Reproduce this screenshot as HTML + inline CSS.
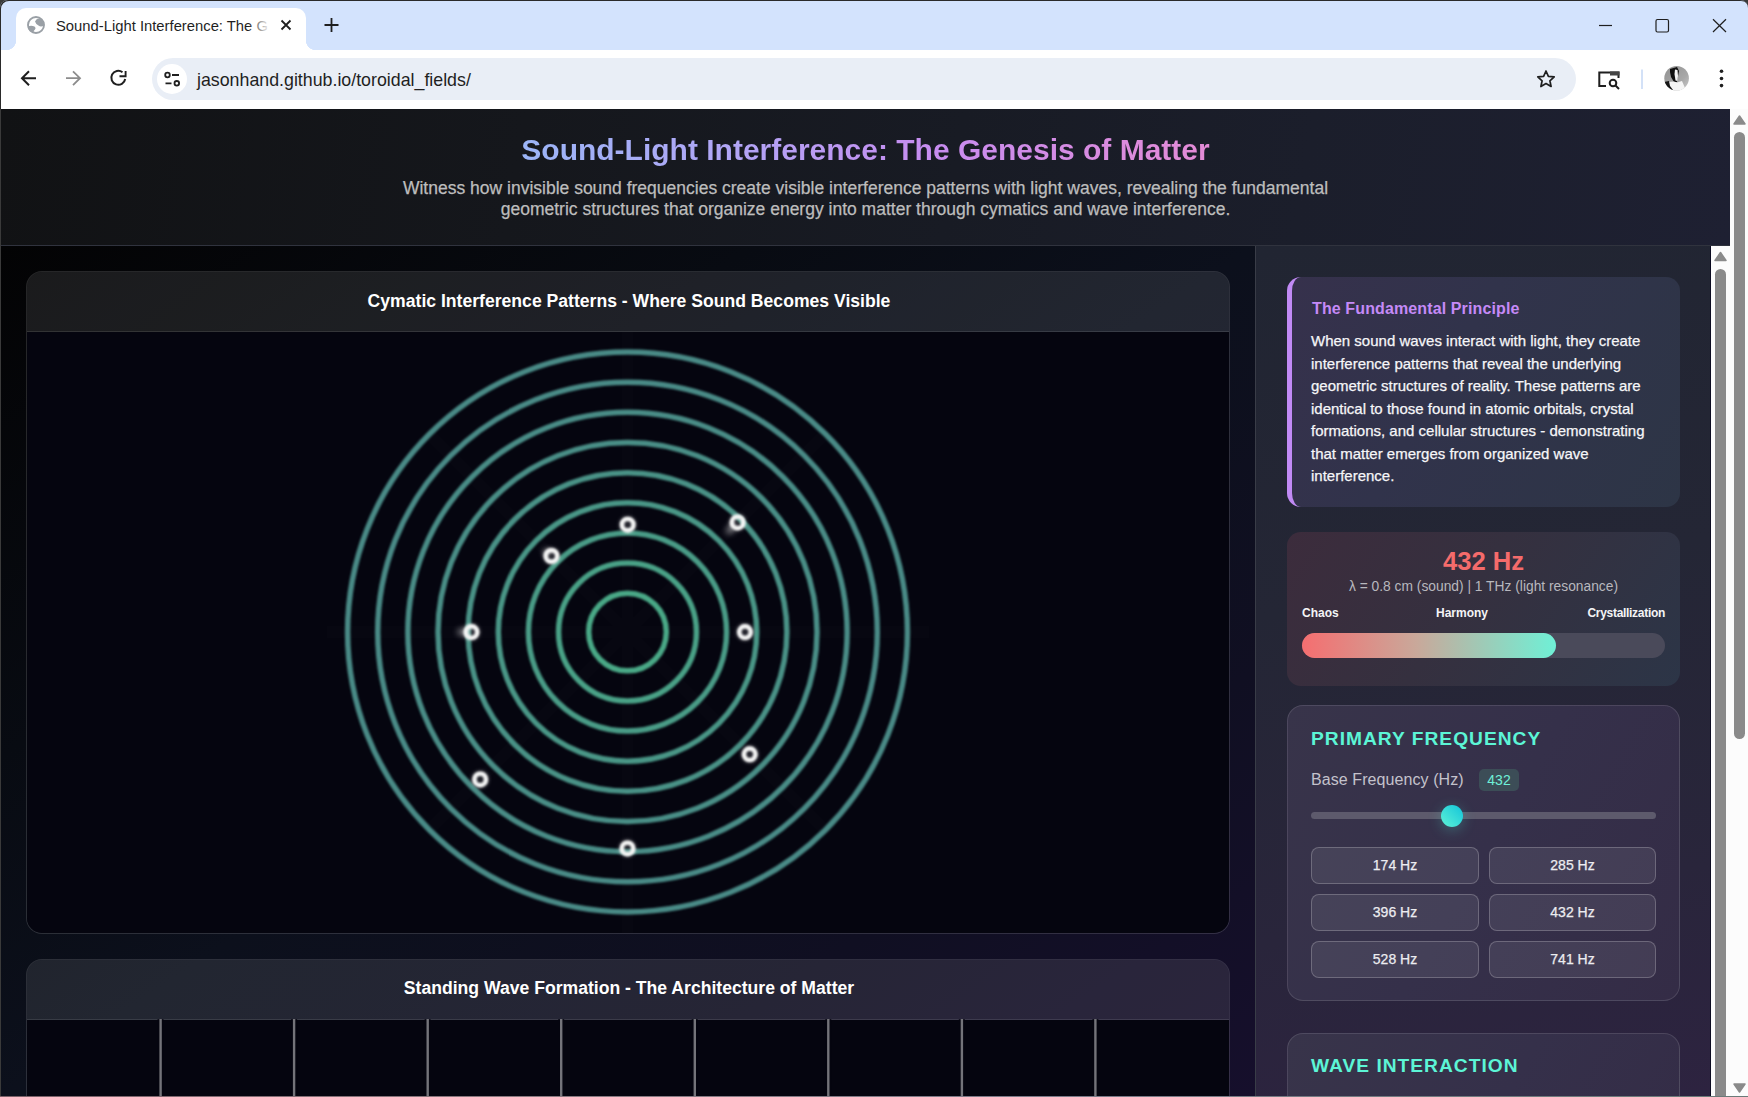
<!DOCTYPE html>
<html><head><meta charset="utf-8">
<style>
*{margin:0;padding:0;box-sizing:border-box}
html,body{width:1748px;height:1097px;overflow:hidden;background:#3a3a3a;font-family:"Liberation Sans",sans-serif;position:relative}
div,svg{position:absolute}
.t{white-space:nowrap}
.pg{-webkit-text-stroke:0.25px currentColor}
/* chrome */
#tabbar{left:0;top:0;width:1748px;height:50px;background:#d3e3fd;border-radius:8px 8px 0 0;box-shadow:inset 1px 1px 0 #2a2a2a}
#tab{left:16px;top:8px;width:290px;height:42px;background:#fff;border-radius:10px 10px 0 0}
#toolbar{left:0;top:50px;width:1748px;height:59px;background:#fff;box-shadow:inset 1px 0 0 #2a2a2a}
#omni{left:152px;top:58px;width:1424px;height:42px;background:#e9eef6;border-radius:21px}
/* page */
#hdr{left:1px;top:109px;width:1729px;height:137px;background:linear-gradient(100deg,#111214 0%,#15171c 30%,#181b24 55%,#1b1e2b 75%,#1e2032 100%);border-bottom:1px solid #30333e}
#leftcol{left:1px;top:246px;width:1254px;height:851px;background:linear-gradient(to bottom right,#030304 0%,#080b12 30%,#0c101c 50%,#100f22 75%,#160f2c 100%)}
#side{left:1255px;top:246px;width:456px;height:851px;background:linear-gradient(170deg,#212532 0%,#242635 40%,#29253b 75%,#2d2340 100%);border-left:1px solid #393c47;border-right:1px solid #0a0a20}
#sb1{left:1711px;top:246px;width:19px;height:851px;background:#fcfcfc}
#sb2{left:1730px;top:109px;width:18px;height:988px;background:#fcfcfc}
.thumb{background:#8a8a8a;border-radius:6px}
.panel{border:1px solid rgba(255,255,255,0.11);border-radius:16px;overflow:hidden;background:rgba(255,255,255,0.03)}
.canvas{left:0;top:60px;width:100%;background:#05050f}
.phead{left:0;top:0;width:100%;height:60px;background:rgba(255,255,255,0.065);border-bottom:1px solid rgba(255,255,255,0.1)}
.ptitle{left:0;width:100%;text-align:center;font-weight:bold;font-size:17.6px;line-height:21px;color:#fff}
.card{border-radius:14px}
.btn{-webkit-text-stroke:0.25px currentColor;height:37px;border:1px solid rgba(255,255,255,0.22);border-radius:8px;background:rgba(255,255,255,0.08);color:#ececf0;font-size:14px;line-height:35px;text-align:center}
</style></head>
<body>
<!-- browser chrome -->
<div id="tabbar"></div>
<div id="tab"></div>
<div id="toolbar"></div>
<!-- tab feet -->
<div style="left:6px;top:40px;width:10px;height:10px;background:radial-gradient(circle at 0 0,#d3e3fd 10px,#fff 10.5px)"></div>
<div style="left:306px;top:40px;width:10px;height:10px;background:radial-gradient(circle at 100% 0,#d3e3fd 10px,#fff 10.5px)"></div>

<div id="omni"></div>


<!-- chrome icons -->
<svg style="left:0;top:0" width="1748" height="109" viewBox="0 0 1748 109">
  <g fill="none" stroke-linecap="butt">
    <!-- globe -->
    <circle cx="36" cy="25" r="8" stroke="#9aa0a6" stroke-width="1.9"/>
    <path d="M35 21.5 Q36 19 38.5 18.5 L42 19.5 Q44.3 22.5 43.8 25.5 Q41 27.5 38.5 25.5 Q36 24.5 35 21.5Z" fill="#9aa0a6"/>
    <path d="M28 26.5 Q31 25 34.5 26.5 Q36.5 28 35 29.5 Q33.5 30.5 33.5 32.5 Q30 32 28.5 29.5Z" fill="#9aa0a6"/>
    <!-- tab close -->
    <path d="M281.5 20.5 L290.5 29.5 M290.5 20.5 L281.5 29.5" stroke="#1f1f1f" stroke-width="1.8"/>
    <!-- new tab plus -->
    <path d="M331.5 18 V32 M324.5 25 H338.5" stroke="#1f1f1f" stroke-width="1.8"/>
    <!-- window controls -->
    <path d="M1599 25.5 H1612" stroke="#1f1f1f" stroke-width="1.2"/>
    <rect x="1656" y="19.5" width="12.5" height="12.5" rx="1.5" stroke="#1f1f1f" stroke-width="1.2"/>
    <path d="M1713 19.3 L1726 32 M1726 19.3 L1713 32" stroke="#1f1f1f" stroke-width="1.2"/>
    <!-- back -->
    <path d="M36 78.2 H22 M29 71.3 L22 78.2 L29 85.2" stroke="#1f1f1f" stroke-width="2"/>
    <!-- forward -->
    <path d="M66 78.2 H80 M73 71.3 L80 78.2 L73 85.2" stroke="#8c8c8c" stroke-width="1.8"/>
    <!-- reload -->
    <path d="M125.2 79 A7 7 0 1 1 122.5 72.2" stroke="#1f1f1f" stroke-width="2"/>
    <path d="M119.5 76.2 H125.6 V71" stroke="#1f1f1f" stroke-width="1.9"/>
    <!-- site info -->
    <circle cx="172" cy="79" r="15" fill="#fff"/>
    <circle cx="167.5" cy="75" r="2.3" stroke="#1f1f1f" stroke-width="1.8"/>
    <path d="M172 75 H179 M165.5 83.3 H171.5" stroke="#1f1f1f" stroke-width="1.8"/>
    <circle cx="176.8" cy="83.3" r="2.3" stroke="#1f1f1f" stroke-width="1.8"/>
    <!-- star -->
    <path d="M1546 71 L1548.4 76.3 L1554.2 76.9 L1549.9 80.8 L1551.1 86.5 L1546 83.6 L1540.9 86.5 L1542.1 80.8 L1537.8 76.9 L1543.6 76.3 Z" stroke="#1f1f1f" stroke-width="1.7" stroke-linejoin="round"/>
    <!-- tab search -->
    <path d="M1606 86 H1599.3 V72.5 H1618.5 V78" stroke="#1f1f1f" stroke-width="2"/>
    <rect x="1610" y="71.5" width="9.5" height="4" fill="#444"/>
    <circle cx="1613" cy="83" r="3.3" stroke="#1f1f1f" stroke-width="2"/>
    <path d="M1615.5 85.5 L1619 89" stroke="#1f1f1f" stroke-width="2"/>
    <!-- separator -->
    <path d="M1642 69.5 V89" stroke="#c5d7f5" stroke-width="1.5"/>
    <!-- kebab -->
    <circle cx="1721.5" cy="71.3" r="1.8" fill="#1f1f1f"/>
    <circle cx="1721.5" cy="78.5" r="1.8" fill="#1f1f1f"/>
    <circle cx="1721.5" cy="85.6" r="1.8" fill="#1f1f1f"/>
  </g>
  <defs>
    <linearGradient id="av" x1="0" y1="0" x2="1" y2="1"><stop offset="0" stop-color="#8a8a8a"/><stop offset="0.6" stop-color="#a8a8a8"/><stop offset="1" stop-color="#dcdcdc"/></linearGradient>
    <linearGradient id="tabfade" x1="0" x2="1"><stop offset="0" stop-color="#fff" stop-opacity="0"/><stop offset="1" stop-color="#fff" stop-opacity="1"/></linearGradient>
  </defs>
  <g transform="translate(1660 62)">
    <clipPath id="avc"><circle cx="16.6" cy="16.3" r="12.3"/></clipPath>
    <g clip-path="url(#avc)">
      <rect x="0" y="0" width="34" height="32" fill="url(#av)"/>
      <path d="M10 7 L17 5 L19 9 L17 20 L14 20 L11 15 L10 10 Z" fill="#111"/>
      <path d="M15 7.5 L17.5 8 L18 14 L17.5 19 L15.5 18.5 L14.5 12 Z" fill="#f5f5f5"/>
      <path d="M8 20 L14 19.5 L17 20.5 L22 19 L25 26 L20 30 L11 30 L8 25 Z" fill="#f6f6f6"/>
      <path d="M4 20 L9 19 L10 24 L13 28 L9 29 L4 24 Z" fill="#151515"/>
    </g>
  </g>
</svg>
<div class="t" style="left:56px;top:16.5px;font-size:14.8px;line-height:18px;color:#1f1f1f">Sound-Light Interference: The G</div>
<div style="left:248px;top:14px;width:22px;height:22px;background:linear-gradient(90deg,rgba(255,255,255,0),#fff)"></div>
<div class="t" style="left:197px;top:68.5px;font-size:17.8px;line-height:22px;color:#1f1f1f">jasonhand.github.io/toroidal_fields/</div>

<!-- page -->
<div id="hdr">
  <div class="t" style="left:0;top:23.4px;width:1729px;text-align:center;font-weight:bold;font-size:30px;line-height:36px"><span style="background:linear-gradient(90deg,#9bb5f7 0%,#b1a6f6 30%,#c78cf0 60%,#e48bd6 100%);-webkit-background-clip:text;background-clip:text;color:transparent">Sound-Light Interference: The Genesis of Matter</span></div>
  <div class="t pg" style="left:0;top:69.2px;width:1729px;text-align:center;font-size:17.5px;line-height:21px;color:#bdbdbd">Witness how invisible sound frequencies create visible interference patterns with light waves, revealing the fundamental<br>geometric structures that organize energy into matter through cymatics and wave interference.</div>
</div>

<div id="leftcol"></div>

<!-- cymatic panel -->
<div class="panel" style="left:26px;top:271px;width:1204px;height:663px">
  <div class="phead"></div><div class="canvas" style="height:601px"></div>
  <div class="ptitle t" style="top:19.4px;left:1px">Cymatic Interference Patterns - Where Sound Becomes Visible</div>
</div>

<!-- standing wave panel -->
<div class="panel" style="left:26px;top:959px;width:1204px;height:200px">
  <div class="phead"></div><div class="canvas" style="height:200px"></div>
  <div class="ptitle t" style="top:17.9px;left:1px">Standing Wave Formation - The Architecture of Matter</div>
</div>


<svg style="left:27px;top:332px" width="1202" height="601" viewBox="0 0 1202 601">
  <defs>
    <filter id="soft" x="-10%" y="-10%" width="120%" height="120%"><feGaussianBlur stdDeviation="0.85"/></filter>
    <filter id="glow" x="-100%" y="-100%" width="300%" height="300%"><feGaussianBlur stdDeviation="2"/></filter>
    <filter id="trail" x="-100%" y="-100%" width="300%" height="300%"><feGaussianBlur stdDeviation="3"/></filter>
  </defs>
  <g stroke="rgba(255,255,255,0.012)" stroke-width="12">
    <path d="M600.5 0 V601 M300 300 H902 M400 100 L800 500 M800 100 L400 500"/>
  </g>
  <g fill="none" filter="url(#soft)">
    <circle cx="600.5" cy="300" r="38.80" stroke="rgb(72,168,134)" stroke-width="5.50"/>
    <circle cx="600.5" cy="300" r="68.94" stroke="rgb(72,161,134)" stroke-width="5.50"/>
    <circle cx="600.5" cy="300" r="99.08" stroke="rgb(72,155,134)" stroke-width="5.50"/>
    <circle cx="600.5" cy="300" r="129.22" stroke="rgb(72,150,134)" stroke-width="5.50"/>
    <circle cx="600.5" cy="300" r="159.36" stroke="rgb(72,146,134)" stroke-width="5.50"/>
    <circle cx="600.5" cy="300" r="189.50" stroke="rgb(72,142,134)" stroke-width="5.50"/>
    <circle cx="600.5" cy="300" r="219.64" stroke="rgb(72,140,134)" stroke-width="5.50"/>
    <circle cx="600.5" cy="300" r="249.78" stroke="rgb(72,138,134)" stroke-width="5.50"/>
    <circle cx="600.5" cy="300" r="279.92" stroke="rgb(72,138,134)" stroke-width="5.50"/>
  </g>
  <g fill="#ffffff" opacity="0.5" filter="url(#trail)">
    <ellipse cx="704" cy="197" rx="6" ry="3.5" transform="rotate(-45 704 197)"/>
    <ellipse cx="437" cy="300" rx="7" ry="3.5"/>
    <ellipse cx="520" cy="220" rx="4" ry="3" />
  </g>
  <g fill="none" stroke="#ffffff" stroke-width="5" opacity="0.4" filter="url(#glow)">
    <circle cx="600.7" cy="192.7" r="5.8"/>
    <circle cx="710.6" cy="190.4" r="5.8"/>
    <circle cx="524.5" cy="224.0" r="5.8"/>
    <circle cx="444.5" cy="300.1" r="5.8"/>
    <circle cx="718.0" cy="300.1" r="5.8"/>
    <circle cx="722.7" cy="422.3" r="5.8"/>
    <circle cx="453.2" cy="447.4" r="5.8"/>
    <circle cx="600.5" cy="516.4" r="5.8"/>
  </g>
  <g fill="none" stroke="#f4f4f4" stroke-width="4.4" filter="url(#soft)">
    <circle cx="600.7" cy="192.7" r="5.8"/>
    <circle cx="710.6" cy="190.4" r="5.8"/>
    <circle cx="524.5" cy="224.0" r="5.8"/>
    <circle cx="444.5" cy="300.1" r="5.8"/>
    <circle cx="718.0" cy="300.1" r="5.8"/>
    <circle cx="722.7" cy="422.3" r="5.8"/>
    <circle cx="453.2" cy="447.4" r="5.8"/>
    <circle cx="600.5" cy="516.4" r="5.8"/>
  </g>
</svg>
<svg style="left:27px;top:1019px" width="1202" height="80" viewBox="0 0 1202 80"><g stroke="#050510" stroke-width="6" opacity="0.8"><path d="M133.5 0 V80 M267.1 0 V80 M400.6 0 V80 M534.2 0 V80 M667.7 0 V80 M801.3 0 V80 M934.8 0 V80 M1068.4 0 V80"/></g><g stroke="#74747a" stroke-width="2.4"><path d="M133.6 0 V80"/><path d="M267.1 0 V80"/><path d="M400.7 0 V80"/><path d="M534.2 0 V80"/><path d="M667.8 0 V80"/><path d="M801.3 0 V80"/><path d="M934.9 0 V80"/><path d="M1068.4 0 V80"/></g></svg>
<div id="side"></div>

<!-- card 1 -->
<div class="card" style="left:1287px;top:277px;width:393px;height:230px;background:linear-gradient(120deg,#36314c 0%,#31334b 40%,#2d3546 100%);border-left:5px solid #c18af5"></div>
<div class="t" style="left:1312px;top:298.7px;font-weight:bold;font-size:16px;line-height:19px;color:#c58af7;letter-spacing:0.12px">The Fundamental Principle</div>
<div class="pg" style="left:1311px;top:330.2px;width:352px;font-size:15px;line-height:22.5px;color:#f6f6f8">When sound waves interact with light, they create interference patterns that reveal the underlying geometric structures of reality. These patterns are identical to those found in atomic orbitals, crystal formations, and cellular structures - demonstrating that matter emerges from organized wave interference.</div>

<!-- card 2 -->
<div class="card" style="left:1287px;top:532px;width:393px;height:154px;background:linear-gradient(125deg,#3c2c3c 0%,#35303f 45%,#2c3547 100%)"></div>
<div class="t" style="left:1287px;top:546.1px;width:393px;text-align:center;font-weight:bold;font-size:25.6px;line-height:30px;color:#f56b6b">432 Hz</div>
<div class="t" style="left:1287px;top:578.2px;width:393px;text-align:center;font-size:13.8px;line-height:17px;color:#b8b8be">λ = 0.8 cm (sound) | 1 THz (light resonance)</div>
<div class="t" style="left:1302px;top:606.3px;font-weight:bold;font-size:12px;line-height:14px;color:#f4f4f6">Chaos</div>
<div class="t" style="left:1412px;top:606.3px;width:100px;text-align:center;font-weight:bold;font-size:12px;line-height:14px;color:#f4f4f6">Harmony</div>
<div class="t" style="left:1565px;top:606.3px;width:100px;text-align:right;font-weight:bold;font-size:12px;line-height:14px;color:#f4f4f6;letter-spacing:-0.3px">Crystallization</div>
<div style="left:1302px;top:633px;width:363px;height:25px;border-radius:13px;background:#4a4a5a"></div>
<div style="left:1302px;top:633px;width:254px;height:25px;border-radius:13px;background:linear-gradient(90deg,#f56e70 0%,#c9a89a 45%,#6ff0d6 100%)"></div>

<!-- card 3 -->
<div class="card" style="left:1287px;top:705px;width:393px;height:296px;border:1px solid rgba(255,255,255,0.12);border-radius:16px;background:linear-gradient(120deg,#38344a 0%,#35304a 50%,#342c46 100%)"></div>
<div class="t" style="left:1311px;top:726.8px;font-weight:bold;font-size:19.2px;line-height:23px;letter-spacing:1px;color:#5cf5d6">PRIMARY FREQUENCY</div>
<div class="t" style="left:1311px;top:769.7px;font-size:16px;line-height:19px;color:#c4c2cc;letter-spacing:0.08px">Base Frequency (Hz)</div>
<div class="t" style="left:1479px;top:769px;width:40px;height:22px;border-radius:5px;background:#3c4d57;color:#6ff0d8;font-size:14px;line-height:22px;text-align:center">432</div>
<div style="left:1311px;top:812px;width:345px;height:7px;border-radius:4px;background:#5d5a6c"></div>
<div style="left:1441px;top:804.5px;width:22px;height:22px;border-radius:50%;background:linear-gradient(45deg,#5ff2d6,#12c4da);box-shadow:0 3px 14px rgba(80,230,210,0.3)"></div>
<div class="btn" style="left:1311px;top:847px;width:168px">174 Hz</div>
<div class="btn" style="left:1489px;top:847px;width:167px">285 Hz</div>
<div class="btn" style="left:1311px;top:894px;width:168px">396 Hz</div>
<div class="btn" style="left:1489px;top:894px;width:167px">432 Hz</div>
<div class="btn" style="left:1311px;top:941px;width:168px">528 Hz</div>
<div class="btn" style="left:1489px;top:941px;width:167px">741 Hz</div>

<!-- card 4 -->
<div class="card" style="left:1287px;top:1033px;width:393px;height:200px;border:1px solid rgba(255,255,255,0.12);border-radius:16px;background:linear-gradient(120deg,#38344a 0%,#35304a 50%,#342c46 100%)"></div>
<div class="t" style="left:1311px;top:1054.4px;font-weight:bold;font-size:19.2px;line-height:23px;letter-spacing:1px;color:#5cf5d6">WAVE INTERACTION</div>

<!-- scrollbars -->
<div id="sb1"></div>
<div id="sb2"></div>
<div class="thumb" style="left:1715px;top:269px;width:11px;height:840px"></div>
<div class="thumb" style="left:1734px;top:132px;width:11px;height:607px"></div>

<svg style="left:1711px;top:109px" width="37" height="988" viewBox="0 0 37 988">
  <path d="M9.5 143.5 L15 151.5 L4 151.5 Z" fill="#8a8a8a" stroke="#8a8a8a" stroke-width="1.5" stroke-linejoin="round"/>
  <path d="M28.5 7 L34 15 L23 15 Z" fill="#8a8a8a" stroke="#8a8a8a" stroke-width="1.5" stroke-linejoin="round"/>
  <path d="M23 975 L34 975 L28.5 983 Z" fill="#8a8a8a" stroke="#8a8a8a" stroke-width="1.5" stroke-linejoin="round"/>
</svg>
<div style="left:0;top:1096px;width:1748px;height:1px;background:linear-gradient(90deg,#7a6068,#8a7a80 30%,#7a7a88 60%,#6a7a78)"></div>
</body></html>
